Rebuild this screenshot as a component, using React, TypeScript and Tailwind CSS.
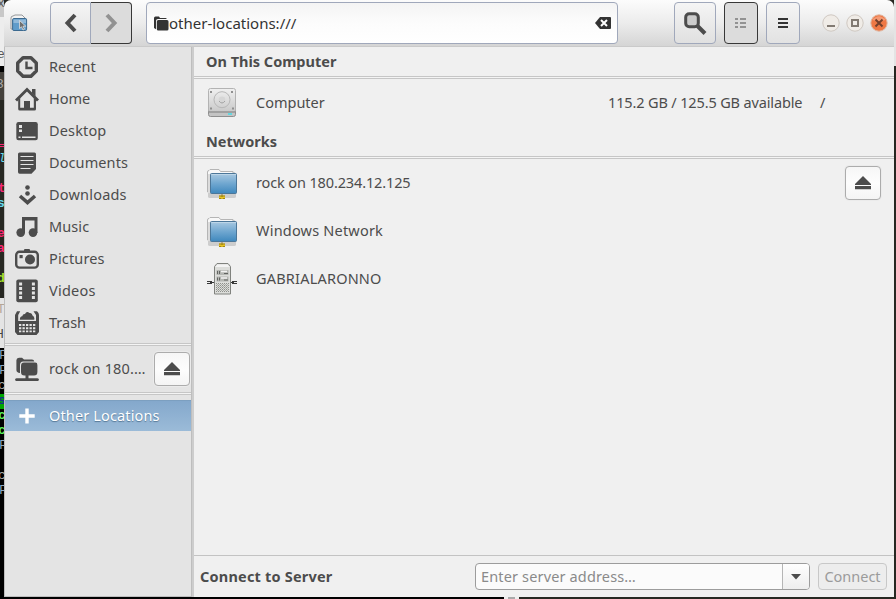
import React from "react";

const INK = "#4c4c4c";

function EjectButton({ className }: { className: string }) {
  return (
    <button
      className={`flex items-center justify-center rounded-[4px] border border-[#acacac] bg-linear-to-b from-[#f6f6f6] via-[#fdfdfd] to-[#f4f4f4] shadow-[0_0_0_1px_#ebebeb] ${className}`}
    >
      <svg width="16" height="14" viewBox="0 0 16 14" fill={INK}>
        <path d="M8 0 L16 8 V9 H0 V8 Z M0 10 H16 V13.2 H0 Z" />
      </svg>
    </button>
  );
}

function SideIcon({ name }: { name: string }) {
  return (
    <svg width="24" height="24" viewBox="0 0 24 24" fill={INK} className="shrink-0">
      {name === "recent" && (
        <>
          <path d="M8 2.7 H16 L21.3 8 V16 L16 21.3 H8 L2.7 16 V8 Z" fill="none" stroke={INK} strokeWidth="3.4" strokeLinejoin="round" />
          <path d="M11.5 6.5 V13 H17.5" fill="none" stroke={INK} strokeWidth="2.4" />
        </>
      )}
      {name === "home" && (
        <>
          <path d="M1 13.5 L12 2.5 L23 13.5" fill="none" stroke={INK} strokeWidth="3" />
          <path d="M17 2 H20.5 V9.5 L17 6 Z" />
          <path d="M3.2 13 L5.2 11 V20.8 H9 V14 H15 V20.8 H18.8 V11 L21 13 V22 Q21 23.5 19.5 23.5 H4.7 Q3.2 23.5 3.2 22 Z" />
          <path d="M9 14 H15 V22 H9 Z" />
        </>
      )}
      {name === "desktop" && (
        <>
          <rect x="1.3" y="3" width="21.5" height="18.2" rx="2.2" />
          <path d="M4 6 H7 V9 H4 Z M4 10.5 H7 V13 H4 Z M3.5 17.5 H5.5 V19 H3.5 Z M7 17.5 H20.5 V19 H7 Z" fill="#e4e4e4" />
        </>
      )}
      {name === "documents" && (
        <>
          <path d="M4.5 1.5 H19.5 Q21 1.5 21 3 V18 L16.5 22.7 H4.5 Q3 22.7 3 21 V3 Q3 1.5 4.5 1.5 Z" />
          <path d="M5.5 5.5 H18.5 M5.5 9.5 H18.5 M5.5 13.5 H18.5 M5.5 17.5 H15.5" stroke="#e4e4e4" strokeWidth="1.2" />
        </>
      )}
      {name === "downloads" && (
        <>
          <circle cx="12.5" cy="4.5" r="2.3" />
          <circle cx="12.5" cy="10.5" r="2.3" />
          <path d="M5 13 L12.5 19.5 L20 13" fill="none" stroke={INK} strokeWidth="3.6" />
        </>
      )}
      {name === "music" && (
        <>
          <path d="M7 2 H22.5 V18 H19.5 V5.5 H10 V18 H7 Z" />
          <circle cx="5.7" cy="17.6" r="4.3" />
          <circle cx="18" cy="17.6" r="4.3" />
        </>
      )}
      {name === "pictures" && (
        <>
          <path d="M9 3 Q9 2 10 2 H14 Q15 2 15 3 V4 H9 Z" />
          <rect x="1.2" y="4.8" width="21.6" height="15.8" rx="3.2" fill="none" stroke={INK} strokeWidth="2.4" />
          <circle cx="15" cy="12.5" r="5" />
          <rect x="4.5" y="8" width="3.2" height="3.2" />
        </>
      )}
      {name === "videos" && (
        <>
          <rect x="1.3" y="0.6" width="21.5" height="22.7" rx="2" />
          <path d="M5.6 3.4 V21.4 M18.4 3.4 V21.4" stroke="#e4e4e4" strokeWidth="3" strokeDasharray="3 1.5" />
        </>
      )}
      {name === "trash" && (
        <>
          <path d="M2 .3 H5.2 L3.2 4 V10 H21 V4 L18.5 .3 H22 Q24 2 24 4 V21 L21.5 24 H2.5 L0 21 V4 Z" />
          <path d="M4.8 8.8 Q4.8 5.5 7.2 5.2 Q7.8 2.8 10 3 Q11.5 -.2 14.5 2 Q17 1.5 17.5 4.5 Q20 6 19.2 8.8 Z" />
          <path d="M4 14 H20.5 M4 17.2 H20.5 M4 20.4 H20.5" stroke="#e4e4e4" strokeWidth="1.9" strokeDasharray="2.3 1.2" />
        </>
      )}
      {name === "network" && (
        <>
          <path d="M1.4 13 V3.3 Q1.4 1 4 .8 H7 L9 2.5 H17 Q19 2.5 19.3 4.6 H8 Q5 5 5 8 V16 Q1.4 15.5 1.4 13 Z" />
          <path d="M9 5.6 H20.2 Q22.4 5.6 22.4 8 V15 Q22.4 18.5 19 18.5 H9.4 Q6 18.5 6 15 V9 Q6 5.6 9 5.6 Z" />
          <path d="M10.5 18 H13.5 V22 H10.5 Z M1.5 21.3 H22.5 Q24 21.3 24 23 L23 24 H1 L0 23 Q0 21.3 1.5 21.3 Z" />
        </>
      )}
      {name === "plus" && <path d="M10.3 4.5 H13.7 V10.3 H19.7 V13.7 H13.7 V19.5 H10.3 V13.7 H4.3 V10.3 H10.3 Z" fill="#fff" />}
    </svg>
  );
}

const PLACES: { label: string; icon: string; spacing: string }[] = [
  { label: "Recent", icon: "recent", spacing: "tracking-[0.05px]" },
  { label: "Home", icon: "home", spacing: "tracking-normal" },
  { label: "Desktop", icon: "desktop", spacing: "tracking-[0.15px]" },
  { label: "Documents", icon: "documents", spacing: "tracking-[0.1px]" },
  { label: "Downloads", icon: "downloads", spacing: "tracking-[0.2px]" },
  { label: "Music", icon: "music", spacing: "tracking-[0.1px]" },
  { label: "Pictures", icon: "pictures", spacing: "tracking-[0.15px]" },
  { label: "Videos", icon: "videos", spacing: "tracking-[0.25px]" },
  { label: "Trash", icon: "trash", spacing: "tracking-normal" },
];

function FolderIcon() {
  return (
    <svg width="32" height="32" viewBox="0 0 32 32" className="mt-[2px]">
      <defs>
        <linearGradient id="folder" x1="0" y1="0" x2="0" y2="1">
          <stop offset="0" stopColor="#a9c9e1" />
          <stop offset=".5" stopColor="#70a7d0" />
          <stop offset="1" stopColor="#3f88bd" />
        </linearGradient>
      </defs>
      <path d="M2 24 H30 V28.5 Q30 30 28 30 H4 Q2 30 2 28.5 Z" fill="#cdcdcd" />
      <path d="M1.5 24 V4 Q1.5 2.5 3 2.5 L4 1.5 H13 L14.5 3.5 H27 V5 H29 V24 Z" fill="#f8f8f8" stroke="#b5b5b5" />
      <path d="M2 6 H5 V25 H2 Z" fill="#dcdcdc" />
      <rect x="4.5" y="5.5" width="26" height="20" rx="1" fill="url(#folder)" stroke="#4c7799" />
      <path d="M5.5 6.5 H30" stroke="#bdd6e8" />
      <path d="M13 27.5 H19 V31 H13 Z" fill="#e7c525" />
      <path d="M16 26 V29 M13 28 H19 M13 30.5 H15.3 M16.7 30.5 H19" stroke="#8d7410" strokeWidth=".8" />
    </svg>
  );
}

function DriveIcon() {
  return (
    <svg width="32" height="32" viewBox="0 0 32 32" className="mb-[2px]">
      <defs>
        <linearGradient id="drive" x1="0" y1="0" x2="0" y2="1">
          <stop offset="0" stopColor="#f0f0f0" />
          <stop offset="1" stopColor="#c9c9c9" />
        </linearGradient>
      </defs>
      <rect x="2.5" y="20" width="27" height="10.5" rx="2" fill="#c4c4c4" stroke="#8f8f8f" />
      <rect x="2.5" y="2.5" width="27" height="23.5" rx="2" fill="url(#drive)" stroke="#b3b3b3" />
      <path d="M3 26 H29" stroke="#858585" />
      <circle cx="16" cy="13.7" r="8" fill="none" stroke="#b7b7b7" />
      <circle cx="16" cy="13.7" r="3.3" fill="#d6d6d6" />
      <path d="M13 15 Q16 19 19 15" fill="none" stroke="#a1a1a1" />
      <path d="M4 5 H6 V7 H4 Z M25 5 H27 V7 H25 Z M4 21.5 H6 V23.5 H4 Z M26 21.5 H28 V23.5 H26 Z" fill="#909090" />
      <path d="M22 28 H26" stroke="#3de0ec" strokeWidth="1.4" />
    </svg>
  );
}

function ServerIcon() {
  return (
    <svg width="32" height="34" viewBox="0 0 32 34" className="mb-[2px]">
      <path d="M1 20.5 H6 M26 20.5 H31 M1 22.5 H6 M26 22.5 H31 M4 21.5 H9 M24 21.5 H28" stroke="#383838" strokeWidth="1.2" />
      <path d="M8.5 5.5 L11 2.5 H22 L24.5 5.5 V33 H8.5 Z" fill="#dcddda" stroke="#80827e" />
      <path d="M9.5 6 L11.3 3.5 H21.7 L23.5 6 Z" fill="#f3f3f3" />
      <path d="M10.5 9 H22.5 V14 H10.5 Z M10.5 15.5 H22.5 V20.5 H10.5 Z" fill="#b4b6b2" />
      <path d="M11.5 10 V13 M13.5 10 V13 M11.5 16.5 V19.5 M13.5 16.5 V19.5 M18 12.5 H22 M18 19 H22" stroke="#626461" />
      <path d="M15 10.5 H21 M15 17 H21" stroke="#f2f2f2" strokeWidth="1.3" />
      <path d="M10 22.5 H23 M10 24.5 H23 M10 26.5 H23 M10 28.5 H23 M10 30.5 H23" stroke="#8e908b" strokeDasharray="1 1" />
      <path d="M11 23.5 H23 M11 25.5 H23 M11 27.5 H23 M11 29.5 H23" stroke="#a8aaa5" strokeDasharray="1 1" />
    </svg>
  );
}

function AppIcon() {
  return (
    <svg width="18" height="18" viewBox="0 0 18 18" className="ml-[6px] shrink-0">
      <path d="M1 15 V4 Q1 2 3 2 L5 1 H12 L14 3 L16 5 V15 Z" fill="#f3f3f3" stroke="#96989a" />
      <rect x="2.6" y="4.5" width="14" height="12" rx="1.3" fill="#609cca" stroke="#3c6a90" />
      <path d="M3.5 5.5 H16 V9 H3.5 Z" fill="#91b9d9" />
      <path d="M9.5 6.5 V14.5 L11.5 12.8 L13 16 L14.5 15.2 L13 12.2 H15.8 Z" fill="#6f6f6f" stroke="#eeeeee" strokeWidth=".7" />
    </svg>
  );
}

function WindowButton({ kind }: { kind: "min" | "max" | "close" }) {
  const close = kind === "close";
  return (
    <svg width="18" height="18" viewBox="0 0 18 18">
      <circle cx="9" cy="9" r="8.2" fill={close ? "#ef7845" : "#f0ece7"} stroke={close ? "#dfb8a4" : "#cfc8c1"} />
      {close && <path d="M2.2 6 Q9 -1.5 15.8 6 Q9 8 2.2 6 Z" fill="#f59a74" />}
      {kind === "min" && <path d="M5 12 H13" stroke="#827a72" strokeWidth="2" />}
      {kind === "max" && <rect x="6" y="6" width="6" height="6" fill="none" stroke="#827a72" strokeWidth="2" />}
      {close && <path d="M5.5 5.5 L12.5 12.5 M12.5 5.5 L5.5 12.5" stroke="#75402c" strokeWidth="2" />}
    </svg>
  );
}

function SectionHeading({ children }: { children: React.ReactNode }) {
  return <h2 className="flex h-[29px] shrink-0 items-center pl-[12px] text-[14.5px] font-bold">{children}</h2>;
}

function Rule() {
  return <div className="h-[3px] shrink-0 border-y border-[#c6c6c6] bg-[#f4f4f4]" />;
}

// Slivers of the editor and terminal windows that sit behind the file manager.
const STRIP: { place: string; color: string; char: string }[] = [
  { place: "top-[-4px] left-[-3px]", color: "text-[#555]", char: "x" },
  { place: "top-[47px] left-[-3px]", color: "text-[#555]", char: "e" },
  { place: "top-[77px] left-[-4px]", color: "text-[#aaa]", char: "3" },
  { place: "top-[151px] left-[-2px]", color: "text-[#66d9ef] italic", char: "l" },
  { place: "top-[181px] left-[-2px]", color: "text-[#f92672] font-bold", char: "t" },
  { place: "top-[196px] left-[-3px]", color: "text-[#66d9ef] font-bold", char: "s" },
  { place: "top-[226px] left-[-3px]", color: "text-[#f92672] font-bold", char: "e" },
  { place: "top-[241px] left-[-3px]", color: "text-[#f92672] font-bold", char: "a" },
  { place: "top-[271px] left-[-3px]", color: "text-[#a6e22e] font-bold", char: "d" },
  { place: "top-[302px] left-[-3px]", color: "text-[#b5a595]", char: "T" },
  { place: "top-[327px] left-[-4px]", color: "text-[#444]", char: "H" },
  { place: "top-[348px] left-[-1px]", color: "text-[#8ba6c0]", char: "F" },
  { place: "top-[363px] left-[-1px]", color: "text-[#8ba6c0]", char: "F" },
  { place: "top-[378px] left-[-2px]", color: "text-[#aaa]", char: "c" },
  { place: "top-[393px] left-[-2px]", color: "text-[#172c8c] font-bold", char: "s" },
  { place: "top-[408px] left-[-2px]", color: "text-[#5cf35c] font-bold", char: "c" },
  { place: "top-[423px] left-[-2px]", color: "text-[#5cf35c] font-bold", char: "c" },
  { place: "top-[438px] left-[-1px]", color: "text-[#8ba6c0]", char: "F" },
  { place: "top-[468px] left-[-2px]", color: "text-[#aaa]", char: "c" },
  { place: "top-[483px] left-[-1px]", color: "text-[#8ba6c0]", char: "F" },
];

function Backdrop() {
  return (
    <div className="relative w-[4px] shrink-0 overflow-hidden bg-black font-['Liberation_Mono',monospace] text-[13px] leading-[16px]">
      <div className="h-[17px] bg-[#c8c8c8]" />
      <div className="h-[49px] bg-[#ededed]" />
      <div className="h-[6px] bg-black" />
      <div className="h-[28px] bg-[#45423d]" />
      <div className="h-[198px] bg-[#272822]" />
      <div className="h-[50px] bg-[#e4e4e4]" />
      <div className="mt-[46px] h-[15px] bg-[#00a800]" />
      <div className="absolute top-[144px] left-0 h-[3px] w-[4px] border-y border-[#f92672]" />
      {STRIP.map((s) => (
        <span key={s.place} className={`absolute ${s.place} ${s.color}`}>
          {s.char}
        </span>
      ))}
    </div>
  );
}

export default function App() {
  return (
    <div className="flex h-[599px] w-[896px] overflow-hidden bg-[#272822] font-['Noto_Sans',sans-serif] text-[14.5px] text-[#4c4c4c]">
      <Backdrop />
      <div className="flex w-[890px] shrink-0 flex-col">
        <header className="flex h-[47px] shrink-0 items-center rounded-t-[7px] border-b border-[#cacaca] bg-linear-to-b from-[#fcfcfc] via-[#ececec] to-[#d5d5d5]">
          <AppIcon />
          <div className="ml-[22px] flex h-[42px] w-[82px] shrink-0">
            <button className="flex w-[41px] items-center justify-center rounded-l-[4px] border border-[#a0a8bb] bg-linear-to-b from-[#f5f5f5] to-[#e2e2e2]">
              <svg width="14" height="20" viewBox="0 0 14 20"><path d="M11 2 L3.5 10 L11 18" fill="none" stroke={INK} strokeWidth="4" /></svg>
            </button>
            <button className="flex w-[41px] items-center justify-center rounded-r-[4px] border-y border-r border-[#383838] bg-[#dcdcdc]">
              <svg width="14" height="20" viewBox="0 0 14 20"><path d="M3 2 L10.5 10 L3 18" fill="none" stroke="#929292" strokeWidth="4" /></svg>
            </button>
          </div>
          <div className="ml-[14px] flex h-[42px] w-[472px] shrink-0 items-center rounded-[4px] border border-[#a0a8bb] bg-linear-to-b from-[#f4f4f4] via-[#fcfcfc] to-white pr-[6px] pl-[7px] text-[15px] text-[#333]">
            <svg width="15" height="15" viewBox="0 0 15 15" fill="#333"><path d="M0 12 V2 Q0 .5 1.5 .5 H5 L6 2 H11.5 Q12.7 2 12.7 3 H4 Q2 3 2 5 V13.3 Z M4.3 4 H13 Q14.5 4 14.5 5.5 V13 Q14.5 14.5 13 14.5 H4.2 Q2.8 14.5 2.8 13 V5.5 Q2.8 4 4.3 4 Z" /></svg>
            <span className="flex-1 whitespace-nowrap">other-locations:///</span>
            <svg width="16" height="12" viewBox="0 0 16 12"><path d="M5 0 H15 Q16 0 16 1 V11 Q16 12 15 12 H5 L0 6 Z" fill="#333" /><path d="M6 3 L12 9 M12 3 L6 9" stroke="#fff" strokeWidth="2" /></svg>
          </div>
          <button className="ml-[56px] flex h-[42px] w-[42px] shrink-0 items-center justify-center rounded-[4px] border border-[#a0a8bb] bg-linear-to-b from-[#f5f5f5] to-[#e0e0e0]">
            <svg width="24" height="24" viewBox="0 0 24 24"><rect x="2.7" y="2.7" width="12.6" height="13" rx="3.5" fill="#ccc" stroke={INK} strokeWidth="3" /><path d="M14.5 15 L22 22.5" stroke={INK} strokeWidth="4" /></svg>
          </button>
          <button className="ml-[8px] flex h-[42px] w-[34px] shrink-0 items-center justify-center rounded-[4px] border border-[#383838] bg-[#dcdcdc]">
            <svg width="12" height="10" viewBox="0 0 12 10"><path d="M0 1 H3 M5 1 H11 M0 5 H3 M5 5 H11 M0 9 H3 M5 9 H11" stroke="#929292" strokeWidth="2" /></svg>
          </button>
          <button className="ml-[8px] flex h-[42px] w-[34px] shrink-0 items-center justify-center rounded-[4px] border border-[#a0a8bb] bg-linear-to-b from-[#f5f5f5] to-[#e2e2e2]">
            <svg width="10" height="10" viewBox="0 0 10 10"><path d="M0 1 H10 M0 5 H10 M0 9 H10" stroke="#333" strokeWidth="2" /></svg>
          </button>
          <div className="ml-[22px] flex gap-[6px]">
            <WindowButton kind="min" />
            <WindowButton kind="max" />
            <WindowButton kind="close" />
          </div>
        </header>

        <div className="flex h-[550px] shrink-0">
          <nav className="flex w-[187px] shrink-0 flex-col border-b border-l border-[#bdbdbd] bg-[#e4e4e4] pt-[4px]">
            {PLACES.map((p) => (
              <a key={p.label} className="flex h-[32px] shrink-0 items-center gap-[10px] pl-[10px]">
                <SideIcon name={p.icon} />
                <span className={p.spacing}>{p.label}</span>
              </a>
            ))}
            <div className="mt-[4px]"><Rule /></div>
            <div className="flex h-[46px] shrink-0 items-center pl-[10px]">
              <SideIcon name="network" />
              <span className="ml-[10px] w-[105px] tracking-[0.15px] whitespace-nowrap">rock on 180.…</span>
              <EjectButton className="h-[34px] w-[36px]" />
            </div>
            <Rule />
            <a className="mt-[5px] flex h-[31px] shrink-0 items-center gap-[10px] border-t border-[#7c9fc0] bg-linear-to-b from-[#84a8cc] to-[#9bbbd8] pl-[10px] text-white [text-shadow:0_1px_1px_#557795]">
              <SideIcon name="plus" />
              <span className="tracking-[0.14px]">Other Locations</span>
            </a>
          </nav>
          <div className="w-[3px] shrink-0 border-l border-[#bebebe] bg-[#cdcdcd]" />
          <main className="flex w-[700px] shrink-0 flex-col bg-[#f0f0f0]">
            <SectionHeading>On This Computer</SectionHeading>
            <Rule />
            <div className="flex h-[48px] shrink-0 items-center pl-[12px]">
              <DriveIcon />
              <span className="ml-[18px] w-[352px]">Computer</span>
              <span className="w-[212px] tracking-[-0.14px] whitespace-nowrap">115.2 GB / 125.5 GB available</span>
              <span>/</span>
            </div>
            <SectionHeading>Networks</SectionHeading>
            <Rule />
            <div className="flex h-[48px] shrink-0 items-center pl-[12px]">
              <FolderIcon />
              <span className="ml-[18px] w-[589px] tracking-[-0.13px]">rock on 180.234.12.125</span>
              <EjectButton className="h-[34px] w-[36px]" />
            </div>
            <div className="flex h-[48px] shrink-0 items-center pl-[12px]">
              <FolderIcon />
              <span className="ml-[18px] tracking-[0.2px]">Windows Network</span>
            </div>
            <div className="flex h-[48px] shrink-0 items-center pl-[12px]">
              <ServerIcon />
              <span className="ml-[18px] tracking-[0.2px]">GABRIALARONNO</span>
            </div>
            <footer className="mt-auto flex h-[42px] shrink-0 items-center border-t border-[#c3c3c3] pl-[6px]">
              <span className="w-[275px] font-bold tracking-[0.2px]">Connect to Server</span>
              <div className="flex h-[27px] w-[335px] shrink-0 overflow-hidden rounded-[4px] border border-[#9c9c9c] bg-[#fbfbfb]">
                <span className="flex w-[307px] items-center border-r border-[#b5b5b5] pl-[5px] tracking-[0.15px] text-[#8a8a8a]">Enter server address…</span>
                <span className="flex flex-1 items-center justify-center bg-linear-to-b from-[#fefefe] to-[#eeeeee]">
                  <svg width="10" height="6" viewBox="0 0 10 6"><path d="M0 0 H10 L5 5.5 Z" fill={INK} /></svg>
                </span>
              </div>
              <button className="ml-[8px] h-[27px] w-[69px] shrink-0 rounded-[4px] border border-[#c8c8c8] bg-[#ededed] leading-[25px] text-[#9b9b9b]">Connect</button>
            </footer>
          </main>
        </div>
        <div className="flex h-[2px] shrink-0 bg-[#272822]">
          <div className="w-[500px] bg-black" />
          <div className="w-[15px] border-x-4 border-[#eee] bg-[#aaa]" />
        </div>
      </div>
      <div className="h-[66px] w-[2px] bg-[#e4e4e4]" />
    </div>
  );
}
